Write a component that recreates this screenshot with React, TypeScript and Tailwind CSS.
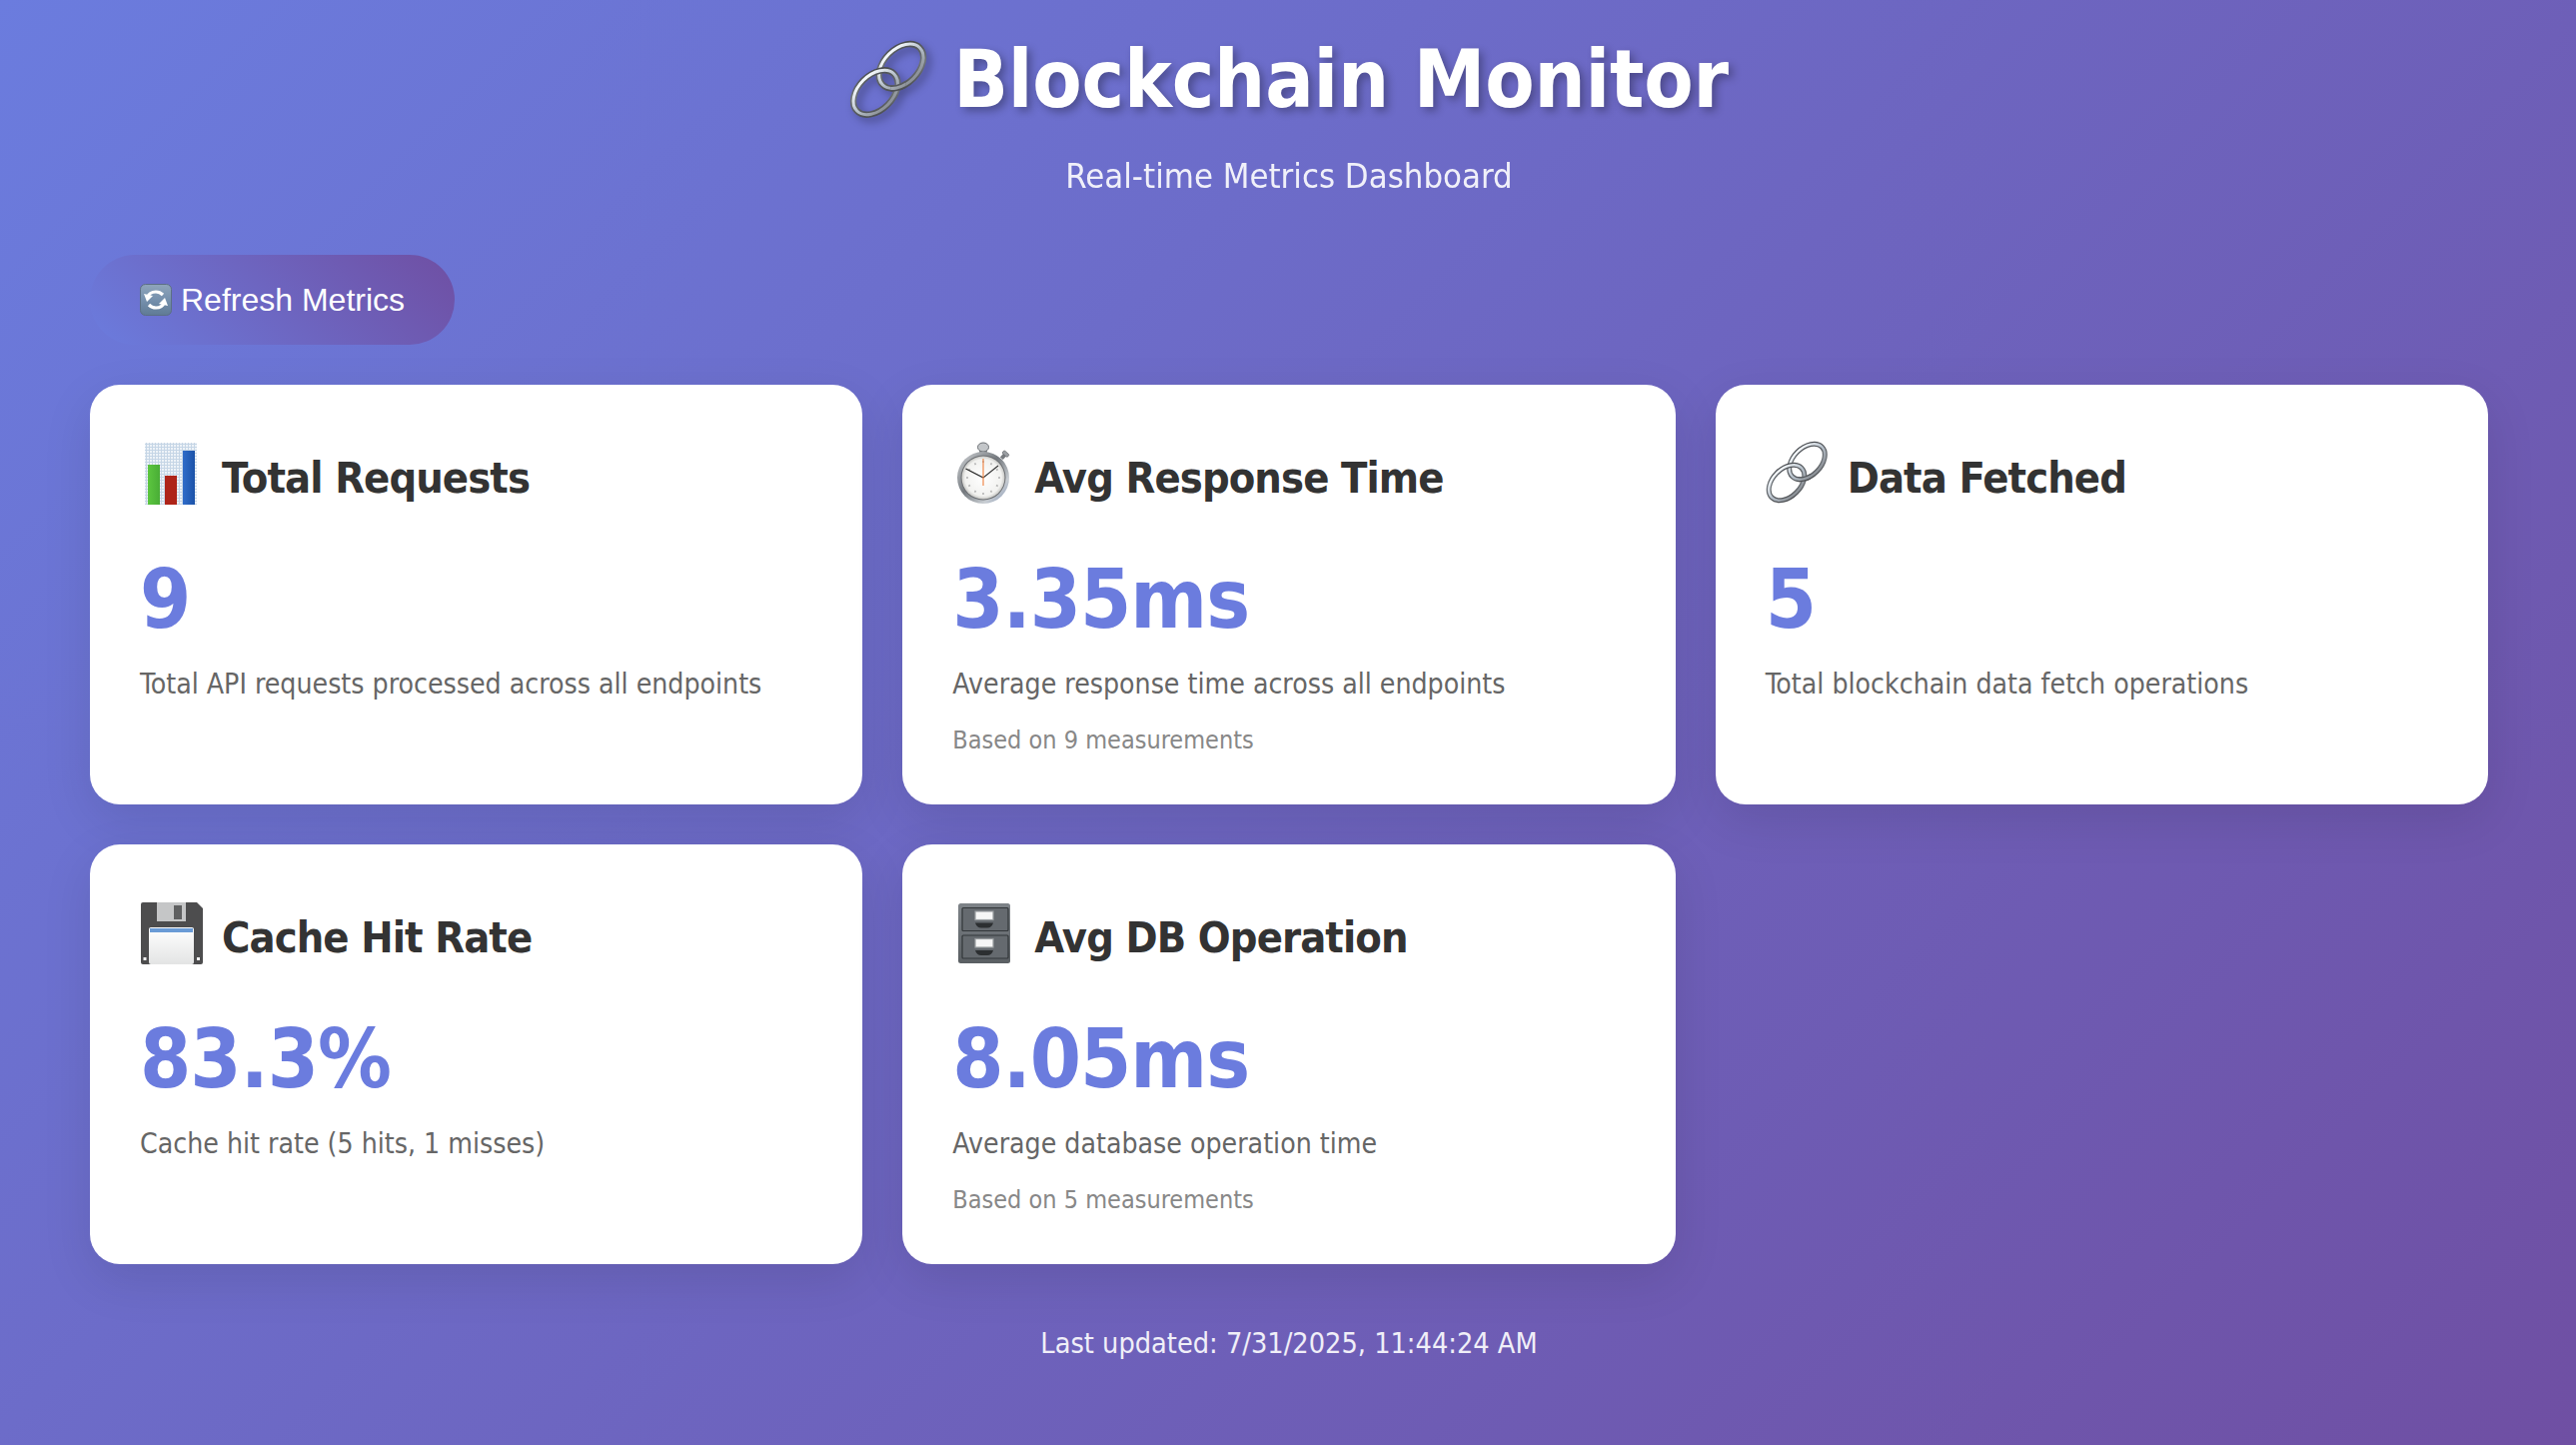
import React from "react";

const font = "font-['DejaVu_Sans_Condensed','DejaVu_Sans',sans-serif]";

function LinkIcon({ className }: { className?: string }) {
  const upper = { cx: 41.5, cy: 21, rx: 13.8, ry: 21, transform: "rotate(45 41.5 21)" };
  const lower = { cx: 21, cy: 42, rx: 13.8, ry: 21, transform: "rotate(45 21 42)" };
  const Ring = ({ shape }: { shape: typeof upper }) => (
    <>
      <ellipse {...shape} stroke="url(#linkEdge)" strokeWidth="5" />
      <ellipse {...shape} stroke="url(#linkShine)" strokeWidth="2.4" />
    </>
  );
  return (
    <svg viewBox="0 0 64 64" className={className}>
      <defs>
        <linearGradient id="linkEdge" x1="0" y1="0" x2="1" y2="1">
          <stop offset="0" stopColor="#3f4145" />
          <stop offset="0.5" stopColor="#6f7479" />
          <stop offset="1" stopColor="#45474a" />
        </linearGradient>
        <linearGradient id="linkShine" x1="0" y1="0" x2="1" y2="0">
          <stop offset="0" stopColor="#f4f8fb" />
          <stop offset="0.5" stopColor="#b8c2cc" />
          <stop offset="1" stopColor="#8d9298" />
        </linearGradient>
        <clipPath id="over">
          <rect x="33" y="32" width="12" height="12" />
        </clipPath>
      </defs>
      <g fill="none">
        <Ring shape={upper} />
        <Ring shape={lower} />
        <g clipPath="url(#over)">
          <Ring shape={upper} />
        </g>
      </g>
    </svg>
  );
}

function ChartIcon() {
  return (
    <svg viewBox="0 0 64 64" className="w-16 h-16">
      <defs>
        <pattern id="grid" width="3" height="3" patternUnits="userSpaceOnUse">
          <rect width="3" height="3" fill="#eef3f8" />
          <path d="M0 .5H3M.5 0V3" stroke="#c6d6e6" strokeWidth="1" />
        </pattern>
        <linearGradient id="gb" x1="0" x2="1">
          <stop offset="0" stopColor="#2f6cc9" />
          <stop offset="1" stopColor="#1b52a8" />
        </linearGradient>
        <linearGradient id="gg" x1="0" x2="1">
          <stop offset="0" stopColor="#5cc63f" />
          <stop offset="1" stopColor="#49ad36" />
        </linearGradient>
      </defs>
      <rect x="5" y="2" width="52" height="62" fill="url(#grid)" />
      <rect x="8" y="24" width="12" height="40" fill="url(#gg)" />
      <rect x="25" y="35" width="12" height="29" fill="#ae2419" />
      <rect x="43" y="10" width="12" height="54" fill="url(#gb)" />
    </svg>
  );
}

function WatchIcon() {
  const ticks = Array.from({ length: 12 }, (_, i) => i * 30);
  return (
    <svg viewBox="0 0 64 64" className="w-16 h-16">
      <defs>
        <linearGradient id="ring" x1="0" y1="0" x2="1" y2="1">
          <stop offset="0" stopColor="#d5d8db" />
          <stop offset="0.45" stopColor="#74797e" />
          <stop offset="0.75" stopColor="#c9ced3" />
          <stop offset="1" stopColor="#7d8fb0" />
        </linearGradient>
        <radialGradient id="face">
          <stop offset="0" stopColor="#ffffff" />
          <stop offset="0.85" stopColor="#f2f2f0" />
          <stop offset="1" stopColor="#c9c9c6" />
        </radialGradient>
      </defs>
      <rect x="27" y="6" width="8" height="6" fill="#8b8f93" />
      <ellipse cx="31" cy="6.5" rx="5.5" ry="4.5" fill="#c3c6c9" stroke="#6c7074" strokeWidth="1" />
      <g transform="rotate(42 50 17)">
        <rect x="48" y="12" width="4" height="6" fill="#777b7f" />
        <rect x="46.5" y="10" width="7" height="3.6" rx="1.5" fill="#9a9ea2" stroke="#5d6165" strokeWidth=".6" />
      </g>
      <circle cx="31" cy="37" r="26" fill="url(#ring)" />
      <circle cx="31" cy="37" r="22.5" fill="#6b6e72" />
      <circle cx="31" cy="37" r="21.5" fill="url(#face)" />
      {ticks.map((a) => (
        <rect key={a} x="30.2" y="20" width="1.6" height="2" fill="#b5b5b5" transform={`rotate(${a} 31 37)`} />
      ))}
      <path d="M31 37L13.5 28" stroke="#222" strokeWidth="1.3" />
      <path d="M31 37L46 25" stroke="#333" strokeWidth="1.1" />
      <path d="M31 18V45" stroke="#ee7f3c" strokeWidth="1.1" />
    </svg>
  );
}

function FloppyIcon() {
  return (
    <svg viewBox="0 0 64 64" className="w-16 h-16">
      <defs>
        <linearGradient id="label" x1="0" y1="0" x2="0" y2="1">
          <stop offset="0" stopColor="#ffffff" />
          <stop offset="1" stopColor="#e3e4e4" />
        </linearGradient>
      </defs>
      <path d="M1 4a2 2 0 0 1 2-2h54l6 6v54a2 2 0 0 1-2 2H3a2 2 0 0 1-2-2z" fill="#4d4d4e" />
      <rect x="17" y="2" width="29" height="19" fill="#c5c6c7" />
      <rect x="34" y="5" width="8" height="14" fill="#5f6061" />
      <rect x="9" y="27" width="45" height="37" rx="2" fill="url(#label)" />
      <rect x="10" y="28" width="43" height="4" fill="#6a9bd6" />
      <rect x="3.5" y="57" width="3" height="3" fill="#f3f3f3" />
      <rect x="57" y="57" width="3" height="3" fill="#f3f3f3" />
    </svg>
  );
}

function CabinetIcon() {
  const Drawer = ({ y }: { y: number }) => (
    <g>
      <rect x="10" y={y} width="46" height="23" rx="1" fill="#656a6f" stroke="#33373a" strokeWidth="1.2" />
      <rect x="23" y={y + 3.5} width="18" height="8.5" fill="#f6f6f6" stroke="#9a9ea1" strokeWidth="1.2" />
      <path d={`M23 ${y + 15}h18c-1 3.5-3 5-6 5h-6c-3 0-5-1.500-6-5z`} fill="#2c2f31" />
    </g>
  );
  return (
    <svg viewBox="0 0 64 64" className="w-16 h-16">
      <defs>
        <linearGradient id="cab" x1="0" y1="0" x2="0" y2="1">
          <stop offset="0" stopColor="#7e8388" />
          <stop offset="1" stopColor="#5a5f63" />
        </linearGradient>
      </defs>
      <rect x="6" y="3" width="52" height="60" rx="2.5" fill="url(#cab)" />
      <Drawer y={7.5} />
      <Drawer y={35} />
    </svg>
  );
}

function RefreshIcon() {
  return (
    <svg viewBox="0 0 32 32" className="w-8 h-8 mr-[9px] shrink-0">
      <defs>
        <linearGradient id="rf" x1="0" y1="0" x2="0" y2="1">
          <stop offset="0" stopColor="#8fa5bb" />
          <stop offset="0.5" stopColor="#7590ad" />
          <stop offset="1" stopColor="#5f7a95" />
        </linearGradient>
      </defs>
      <rect x=".5" y=".5" width="31" height="31" rx="5" fill="url(#rf)" stroke="#5c6f85" />
      <g fill="none" stroke="#fff" strokeWidth="3.2">
        <path d="M7.5 13.5C9 9.5 12 8 16 8c3 0 5 1 7 3" />
        <path d="M24.5 18.500C23 22.500 20 24 16 24c-3 0-5-1-7-3" />
      </g>
      <path d="M4 10l9 2-6 6z" fill="#fff" />
      <path d="M28 22l-9-2 6-6z" fill="#fff" />
    </svg>
  );
}

function Card({
  icon,
  title,
  value,
  desc,
  note,
}: {
  icon: React.ReactNode;
  title: string;
  value: string;
  desc: string;
  note?: string;
}) {
  return (
    <div className="bg-white rounded-[30px] h-[420px] px-[50px] pt-[56px] shadow-[0_16px_50px_rgba(0,0,0,0.1)]">
      <div className="flex items-center h-[64px]">
        <div className="w-[82px] shrink-0">{icon}</div>
        <h3 className="text-[43px] leading-[64px] pt-[10px] font-bold tracking-[-0.9px] text-[#333]">{title}</h3>
      </div>
      <div className="text-[82px] leading-[96px] font-bold tracking-[-1px] text-[#6b7cde] mt-[47px]">{value}</div>
      <p className="text-[28.2px] leading-[40px] text-[#666] mt-[17px]">{desc}</p>
      {note && <p className="text-[25px] leading-[36px] text-[#888] mt-[18px]">{note}</p>}
    </div>
  );
}

export default function App() {
  return (
    <div className={`min-h-screen bg-[linear-gradient(135deg,#6b7cde_0%,#6f4fa3_100%)] pl-[90px] pr-[88px] pt-[38px] ${font}`}>
      <header className="text-center text-white">
        <h1 className="flex justify-center items-center gap-[24px] text-[80px] leading-[84px] font-bold tracking-[-0.2px] [text-shadow:4px_4px_8px_rgba(0,0,0,0.3)]">
          <LinkIcon className="w-[80px] h-[80px] drop-shadow-[4px_4px_4px_rgba(0,0,0,0.3)]" />
          <span>Blockchain Monitor</span>
        </h1>
        <p className="text-[34.4px] leading-[44px] mt-[32px] opacity-90">Real-time Metrics Dashboard</p>
      </header>
      <button className="flex items-center mt-[57px] h-[90px] w-[365px] pl-[50px] rounded-[45px] bg-[linear-gradient(45deg,#6b7cde,#6f4fa3)] text-white text-[32px] font-['Liberation_Sans',sans-serif]">
        <RefreshIcon />
        Refresh Metrics
      </button>
      <div className="grid grid-cols-3 gap-[40px] mt-[40px]">
        <Card icon={<ChartIcon />} title="Total Requests" value="9" desc="Total API requests processed across all endpoints" />
        <Card
          icon={<WatchIcon />}
          title="Avg Response Time"
          value="3.35ms"
          desc="Average response time across all endpoints"
          note="Based on 9 measurements"
        />
        <Card icon={<LinkIcon className="w-16 h-16" />} title="Data Fetched" value="5" desc="Total blockchain data fetch operations" />
        <Card icon={<FloppyIcon />} title="Cache Hit Rate" value="83.3%" desc="Cache hit rate (5 hits, 1 misses)" />
        <Card
          icon={<CabinetIcon />}
          title="Avg DB Operation"
          value="8.05ms"
          desc="Average database operation time"
          note="Based on 5 measurements"
        />
      </div>
      <p className="text-center text-white/90 text-[28.6px] leading-[40px] mt-[59px]">Last updated: 7/31/2025, 11:44:24 AM</p>
    </div>
  );
}
